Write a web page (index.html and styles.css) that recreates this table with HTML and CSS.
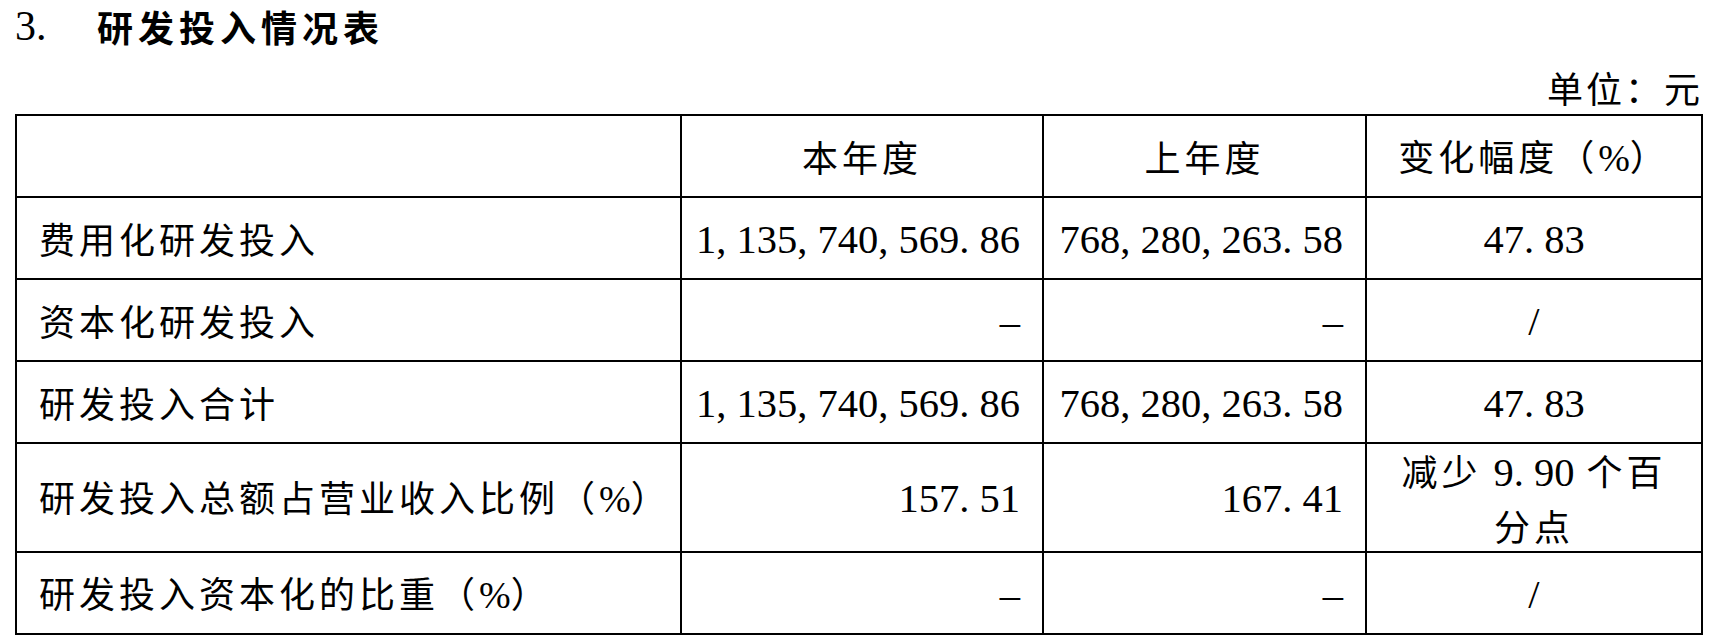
FILE: index.html
```html
<!DOCTYPE html>
<html lang="zh-CN">
<head>
<meta charset="utf-8">
<title>研发投入情况表</title>
<link rel="stylesheet" href="styles.css">
</head>
<body>
<div class="page">
  <h3 class="title"><span class="title-no">3.</span><span class="title-text">研发投入情况表</span></h3>
  <div class="unit"><span class="unit-text">单位：元</span></div>
  <table class="rd">
    <colgroup>
      <col class="c1"><col class="c2"><col class="c3"><col class="c4">
    </colgroup>
    <tr class="head">
      <td></td>
      <td class="ctr">本年度</td>
      <td class="ctr">上年度</td>
      <td class="ctr">变化幅度（<span class="pct">%</span>）</td>
    </tr>
    <tr>
      <td class="label">费用化研发投入</td>
      <td class="val"><span class="num">1<span class="p">,</span>135<span class="p">,</span>740<span class="p">,</span>569<span class="p">.</span>86</span></td>
      <td class="val"><span class="num">768<span class="p">,</span>280<span class="p">,</span>263<span class="p">.</span>58</span></td>
      <td class="ctr"><span class="num">47<span class="p">.</span>83</span></td>
    </tr>
    <tr>
      <td class="label">资本化研发投入</td>
      <td class="val"><span class="num">–</span></td>
      <td class="val"><span class="num">–</span></td>
      <td class="ctr"><span class="num">/</span></td>
    </tr>
    <tr>
      <td class="label">研发投入合计</td>
      <td class="val"><span class="num">1<span class="p">,</span>135<span class="p">,</span>740<span class="p">,</span>569<span class="p">.</span>86</span></td>
      <td class="val"><span class="num">768<span class="p">,</span>280<span class="p">,</span>263<span class="p">.</span>58</span></td>
      <td class="ctr"><span class="num">47<span class="p">.</span>83</span></td>
    </tr>
    <tr class="tall">
      <td class="label">研发投入总额占营业收入比例（<span class="pct">%</span>）</td>
      <td class="val"><span class="num">157<span class="p">.</span>51</span></td>
      <td class="val"><span class="num">167<span class="p">.</span>41</span></td>
      <td class="ctr two">减少 <span class="num">9<span class="p">.</span>90</span> 个百<br>分点</td>
    </tr>
    <tr>
      <td class="label">研发投入资本化的比重（<span class="pct">%</span>）</td>
      <td class="val"><span class="num">–</span></td>
      <td class="val"><span class="num">–</span></td>
      <td class="ctr"><span class="num">/</span></td>
    </tr>
  </table>
</div>
</body>
</html>
```

FILE: styles.css
```css
html, body {
  margin: 0;
  padding: 0;
  background: #fff;
}

body {
  font-family: "Noto Sans CJK SC", "Liberation Serif", serif;
  color: #000;
}

.page {
  padding: 0 15px;
}

.title {
  margin: 0;
  height: 52px;
  line-height: 52px;
  font-size: 36px;
  font-weight: 700;
  display: flex;
  align-items: center;
}

.title-no {
  font-family: "Liberation Serif", serif;
  font-size: 42px;
  font-weight: 400;
  width: 82px;
}

.title-text {
  letter-spacing: 5px;
}

.unit {
  padding-top: 8px;
  height: 54px;
  line-height: 54px;
  text-align: right;
  font-size: 36px;
}

.unit-text {
  letter-spacing: 3px;
  margin-right: -2px;
}

.rd {
  width: 100%;
  table-layout: fixed;
  border-collapse: collapse;
  border: 2px solid #000;
}

.c1 { width: 665px; }
.c2 { width: 362px; }
.c3 { width: 323px; }
.c4 { width: 336px; }

.rd td {
  border: 2px solid #000;
  height: 80px;
  padding: 0 20px 0 22px;
  font-size: 36px;
  letter-spacing: 4px;
  line-height: 52px;
  vertical-align: middle;
  white-space: nowrap;
}

.rd tr.tall td {
  height: 105px;
}

.rd td.label {
  text-align: left;
}

.rd td.val {
  text-align: right;
  padding-left: 0;
  padding-right: 22px;
}

.rd td.ctr {
  text-align: center;
  padding: 0 8px;
}

.num {
  font-family: "Liberation Serif", serif;
  font-size: 40.5px;
  letter-spacing: 0;
}

.num .p {
  display: inline-block;
  width: 0.5em;
  text-align: left;
}

.pct {
  font-family: "Liberation Serif", serif;
  font-size: 38px;
  letter-spacing: 0;
}
```
